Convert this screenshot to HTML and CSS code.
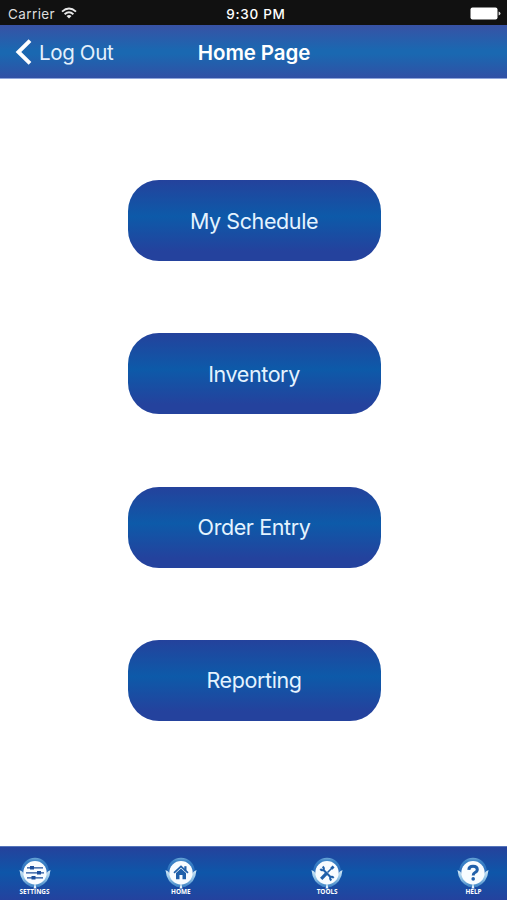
FILE: index.html
```html
<!DOCTYPE html>
<html lang="en">
<head>
    <meta charset="UTF-8">
    <title>Home Page</title>
    <link rel="stylesheet" href="styles.css">
</head>
<body>
    <!-- shared parts of the toolbar icons -->
    <svg class="defs" width="0" height="0">
        <defs>
            <linearGradient id="ball" x1="0" y1="0" x2="0" y2="1">
                <stop offset="0" stop-color="#6fa9d8"/>
                <stop offset="0.12" stop-color="#3c83c6"/>
                <stop offset="0.65" stop-color="#2365b8"/>
                <stop offset="1" stop-color="#8fc4e8"/>
            </linearGradient>
            <linearGradient id="wing" x1="0" y1="0" x2="0" y2="1">
                <stop offset="0" stop-color="#d5eaf7"/>
                <stop offset="0.5" stop-color="#8fc1e5"/>
                <stop offset="1" stop-color="#3b80c3"/>
            </linearGradient>
        </defs>
        <symbol id="badge" viewBox="0 0 34 32">
            <circle cx="17" cy="14.5" r="13.8" fill="url(#ball)"/>
            <path d="M1.5 13 Q4.5 14 6 17 Q9 26 17 27.5 Q25 26 28 17 Q29.5 14 32.5 13 Q31.5 25.5 21 30 H13 Q2.5 25.5 1.5 13Z" fill="url(#wing)"/>
            <circle cx="17" cy="15.8" r="11.7" fill="#f8fcff"/>
            <path d="M17 26 L18.5 31.5 H15.5Z" fill="#e8f4fb"/>
        </symbol>
    </svg>

    <div class="statusBar">
        <div class="carrier">
            <span>Carrier</span>
            <svg width="16" height="12" viewBox="0 0 16 12" fill="none" stroke="#e8e8e8" stroke-width="1.9">
                <path d="M1 4.6 Q8 -1.6 15 4.6"/>
                <path d="M3.6 7.2 Q8 3.4 12.4 7.2"/>
                <path d="M8 11.6 L5.5 9 Q8 7 10.5 9Z" fill="#e8e8e8" stroke="none"/>
            </svg>
        </div>
        <div class="time">9:30 PM</div>
        <div class="battery">
            <svg width="31" height="13" viewBox="0 0 31 13">
                <rect x="0.5" y="0.5" width="27" height="12" rx="2" fill="#fff"/>
                <path d="M28.6 4.5 Q30.5 5 30.5 6.5 Q30.5 8 28.6 8.5Z" fill="#ddd"/>
            </svg>
        </div>
    </div>

    <header>
        <a class="back">
            <svg width="17" height="26" viewBox="0 0 17 26" fill="none" stroke="#fff" stroke-width="3.9">
                <path d="M15 1.6 L3.4 13 L15 24.4"/>
            </svg>
            <span>Log Out</span>
        </a>
        <h1>Home Page</h1>
    </header>

    <main>
        <button>My Schedule</button>
        <button>Inventory</button>
        <button>Order Entry</button>
        <button>Reporting</button>
    </main>

    <footer>
        <div class="tab">
            <svg width="34" height="32" viewBox="0 0 34 32">
                <use href="#badge"/>
                <g stroke="#1d4f9c" stroke-width="1.3">
                    <path d="M9 10.8 H25 M8 15.8 H26 M9 20.8 H25"/>
                    <path d="M14 9.1 V12.500 M21 14.1 V17.500 M15.500 19.1 V22.500" stroke-width="4"/>
                </g>
            </svg>
            <span>SETTINGS</span>
        </div>
        <div class="tab">
            <svg width="34" height="32" viewBox="0 0 34 32">
                <use href="#badge"/>
                <g fill="#2060aa">
                    <path d="M12 16 L17 11.5 L22 16 V22.3 H18.5 V18 H15.5 V22.3 H12Z"/>
                    <path d="M10 15.8 L17 9.3 L24 15.8" fill="none" stroke="#2060aa" stroke-width="1.7"/>
                    <rect x="20.3" y="9.2" width="2.2" height="4.500"/>
                </g>
            </svg>
            <span>HOME</span>
        </div>
        <div class="tab">
            <svg width="34" height="32" viewBox="0 0 34 32">
                <use href="#badge"/>
                <g fill="none" stroke="#2060aa">
                    <path d="M13 12.5 L21 20.5" stroke-width="2.2"/>
                    <path d="M10.3 12 Q12 14 13.5 12.7 Q14.5 11 12.6 9.6 M23.7 21 Q22 19 20.5 20.3 Q19.5 22 21.4 23.4" stroke-width="2"/>
                    <path d="M22.5 10.5 L17.5 15.5" stroke-width="1.6"/>
                    <path d="M16.3 16.7 L11.2 21.8" stroke-width="3.3"/>
                    <path d="M23.6 9.4 L21.3 11.7" stroke-width="2.8"/>
                </g>
            </svg>
            <span>TOOLS</span>
        </div>
        <div class="tab">
            <svg width="34" height="32" viewBox="0 0 34 32">
                <use href="#badge"/>
                <path d="M12.800 12.800 Q13 9.300 17 9.300 Q21.300 9.300 21.300 12.500 Q21.300 14.400 19 15.500 Q17.200 16.400 17.200 18.500" fill="none" stroke="#2060aa" stroke-width="3"/>
                <circle cx="17.2" cy="21.900" r="1.800" fill="#2060aa"/>
            </svg>
            <span>HELP</span>
        </div>
    </footer>
</body>
</html>
```
FILE: styles.css
```css
* {box-sizing: border-box}
body {
    font-family: Inter, Roboto, sans-serif;
    margin: 0;
    height: 900px;
    display: flex;
    flex-direction: column;
    background-color: #fff;
    color: #fff;
    overflow: hidden;
}
svg {
    display: block;
    flex: none;
}
.defs {
    position: absolute;
}

/* Status bar */
.statusBar {
    height: 25px;
    display: grid;
    grid-template-columns: 1fr auto 1fr;
    align-items: center;
    padding: 2px 6px 0 8px;
    background-color: #111;
    font-size: 13.5px;
    line-height: 20px;
}
.carrier {
    display: flex;
    align-items: center;
    gap: 6px;
    color: #ddd;
    letter-spacing: 0.4px;
}
.carrier svg {
    margin-top: -2px;
}
.time {
    font-weight: 500;
    letter-spacing: 0.7px;
    padding-left: 3px;
}
.battery {
    display: flex;
    justify-content: flex-end;
}

/* Navigation bar */
header {
    height: 54px;
    display: grid;
    grid-template-columns: 1fr auto 1fr;
    align-items: center;
    padding: 1px 14px 0 15px;
    background: linear-gradient(#3852a5, #1a68b1 48%, #1a68b1 55%, #3150a5);
    border-bottom: 1px solid #8fa5da;
}
.back {
    display: flex;
    align-items: center;
    gap: 7px;
    font-size: 20.5px;
    letter-spacing: -0.35px;
    color: #e4f0fc;
}
h1 {
    margin: 0;
    font-size: 20.5px;
    font-weight: 600;
    letter-spacing: -0.1px;
}

/* Menu */
main {
    flex: 1;
    display: flex;
    flex-direction: column;
    align-items: center;
    gap: 72.3px;
    padding: 101px 0 0 1px;
}
button {
    width: 253px;
    height: 81px;
    padding: 0;
    border: none;
    border-radius: 31px;
    background: linear-gradient(#24429c, #0d5aa9 45%, #24429d 88%, #24429d);
    color: #e4f3ff;
    font-family: inherit;
    font-size: 21.5px;
    letter-spacing: -0.4px;
    cursor: pointer;
}

/* Bottom toolbar */
footer {
    height: 54px;
    display: flex;
    justify-content: space-between;
    padding: 10px 13px 0 14px;
    background: linear-gradient(#25429c, #0e56a9 48%, #24429e);
    border-top: 1px solid #5575ba;
}
.tab {
    width: 41px;
    display: flex;
    flex-direction: column;
    align-items: center;
}
.tab span {
    font-family: "Open Sans", sans-serif;
    font-size: 6.4px;
    font-weight: 700;
    line-height: 6px;
}
```
